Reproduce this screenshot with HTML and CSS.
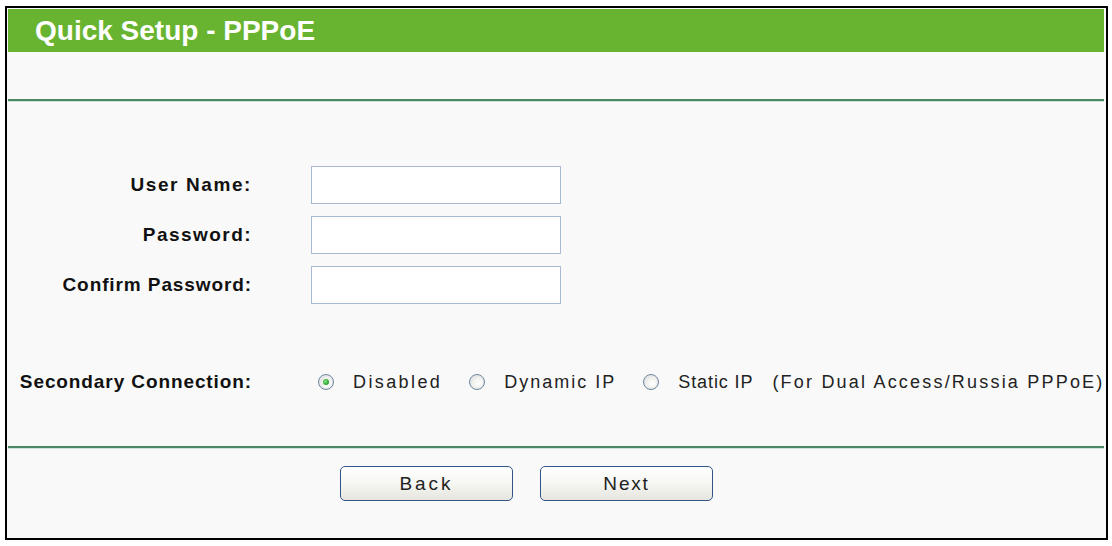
FILE: index.html
```html
<!DOCTYPE html>
<html>
<head>
<meta charset="utf-8">
<title>Quick Setup - PPPoE</title>
<link rel="stylesheet" href="styles.css">
</head>
<body>
<div class="frame">
  <div class="title">Quick Setup - PPPoE</div>
  <div class="spacer"></div>
  <div class="rule"></div>
  <div class="fields">
    <label class="lbl lbl-user">User Name:</label>
    <input class="txt" type="text">
    <label class="lbl lbl-pass">Password:</label>
    <input class="txt" type="password">
    <label class="lbl">Confirm Password:</label>
    <input class="txt" type="password">
  </div>
  <div class="secondary">
    <span class="lbl">Secondary Connection:</span>
    <div class="options">
      <span class="opt"><span class="radio checked"></span><span class="opt-text t-disabled">Disabled</span></span>
      <span class="opt"><span class="radio"></span><span class="opt-text t-dynamic">Dynamic IP</span></span>
      <span class="opt opt-last"><span class="radio"></span><span class="opt-text t-static">Static IP</span></span>
      <span class="note">(For Dual Access/Russia PPPoE)</span>
    </div>
  </div>
  <div class="rule rule-low"></div>
  <div class="actions">
    <button class="btn btn-back" type="button">Back</button>
    <button class="btn" type="button">Next</button>
  </div>
</div>
</body>
</html>
```
FILE: styles.css
```css
html, body {
  margin: 0;
  padding: 0;
  background: #ffffff;
}

.frame {
  box-sizing: border-box;
  margin: 6px 0 0 5px;
  width: 1103px;
  height: 534px;
  border: 2px solid #000000;
  padding: 1px 2px 0 1px;
  background: #f9f9f9;
  font-family: "Liberation Sans", Arial, sans-serif;
  color: #111111;
}

.title {
  height: 43px;
  line-height: 43px;
  background: #68b430;
  color: #ffffff;
  font-weight: bold;
  font-size: 28px;
  padding-left: 27px;
}

.spacer {
  height: 47px;
}

.rule {
  height: 2px;
  background: #4a8966;
  box-shadow: 0 1px 0 #cfe3d6;
}

.rule-low {
  margin-top: 45px;
}

.fields {
  margin-top: 65px;
  display: grid;
  grid-template-columns: 244px 250px;
  column-gap: 59px;
  row-gap: 12px;
  align-items: center;
}

.lbl {
  text-align: right;
  font-weight: bold;
  font-size: 19px;
  letter-spacing: 0.9px;
  color: #111111;
  white-space: nowrap;
}

.lbl-user {
  letter-spacing: 1.6px;
}

.lbl-pass {
  letter-spacing: 1.45px;
}

.txt {
  box-sizing: border-box;
  width: 250px;
  height: 38px;
  margin: 0;
  border: 1px solid #a7bad1;
  background: #ffffff;
}

.secondary {
  margin-top: 59px;
  height: 38px;
  display: flex;
  align-items: center;
}

.secondary .lbl {
  width: 244px;
  flex: none;
}

.options {
  display: flex;
  align-items: center;
  padding-left: 66px;
  font-size: 18px;
  color: #222222;
  white-space: nowrap;
  flex: none;
}

.opt {
  display: inline-flex;
  align-items: center;
  margin-right: 27px;
}

.opt-last {
  margin-right: 19px;
}

.t-disabled {
  letter-spacing: 2.4px;
}

.t-dynamic {
  letter-spacing: 2px;
}

.t-static {
  letter-spacing: 0.9px;
}

.radio {
  box-sizing: border-box;
  width: 16px;
  height: 16px;
  border-radius: 50%;
  border: 1px solid #71879c;
  background: radial-gradient(circle at 62% 62%, #ffffff 0%, #f0f0ec 50%, #cfd4d9 100%);
  box-shadow: inset 0 0 0 1px #e4e8ec;
  margin-right: 19px;
  position: relative;
  flex: none;
}

.radio.checked::after {
  content: "";
  position: absolute;
  left: 4px;
  top: 4px;
  width: 6px;
  height: 6px;
  border-radius: 50%;
  background: radial-gradient(circle at 40% 40%, #8ae68a 0%, #2ea72e 60%, #1f8a1f 100%);
}

.note {
  letter-spacing: 2.2px;
}

.actions {
  display: flex;
  gap: 27px;
  padding: 18px 0 0 332px;
}

.btn {
  box-sizing: border-box;
  width: 173px;
  height: 35px;
  margin: 0;
  border: 1px solid #34578a;
  border-radius: 5px;
  background: linear-gradient(#ffffff 0%, #f6f6f2 50%, #e6e5df 100%);
  font-family: "Liberation Sans", Arial, sans-serif;
  font-size: 19px;
  letter-spacing: 1.8px;
  color: #222222;
  padding: 0;
}

.btn-back {
  letter-spacing: 3px;
}
```
